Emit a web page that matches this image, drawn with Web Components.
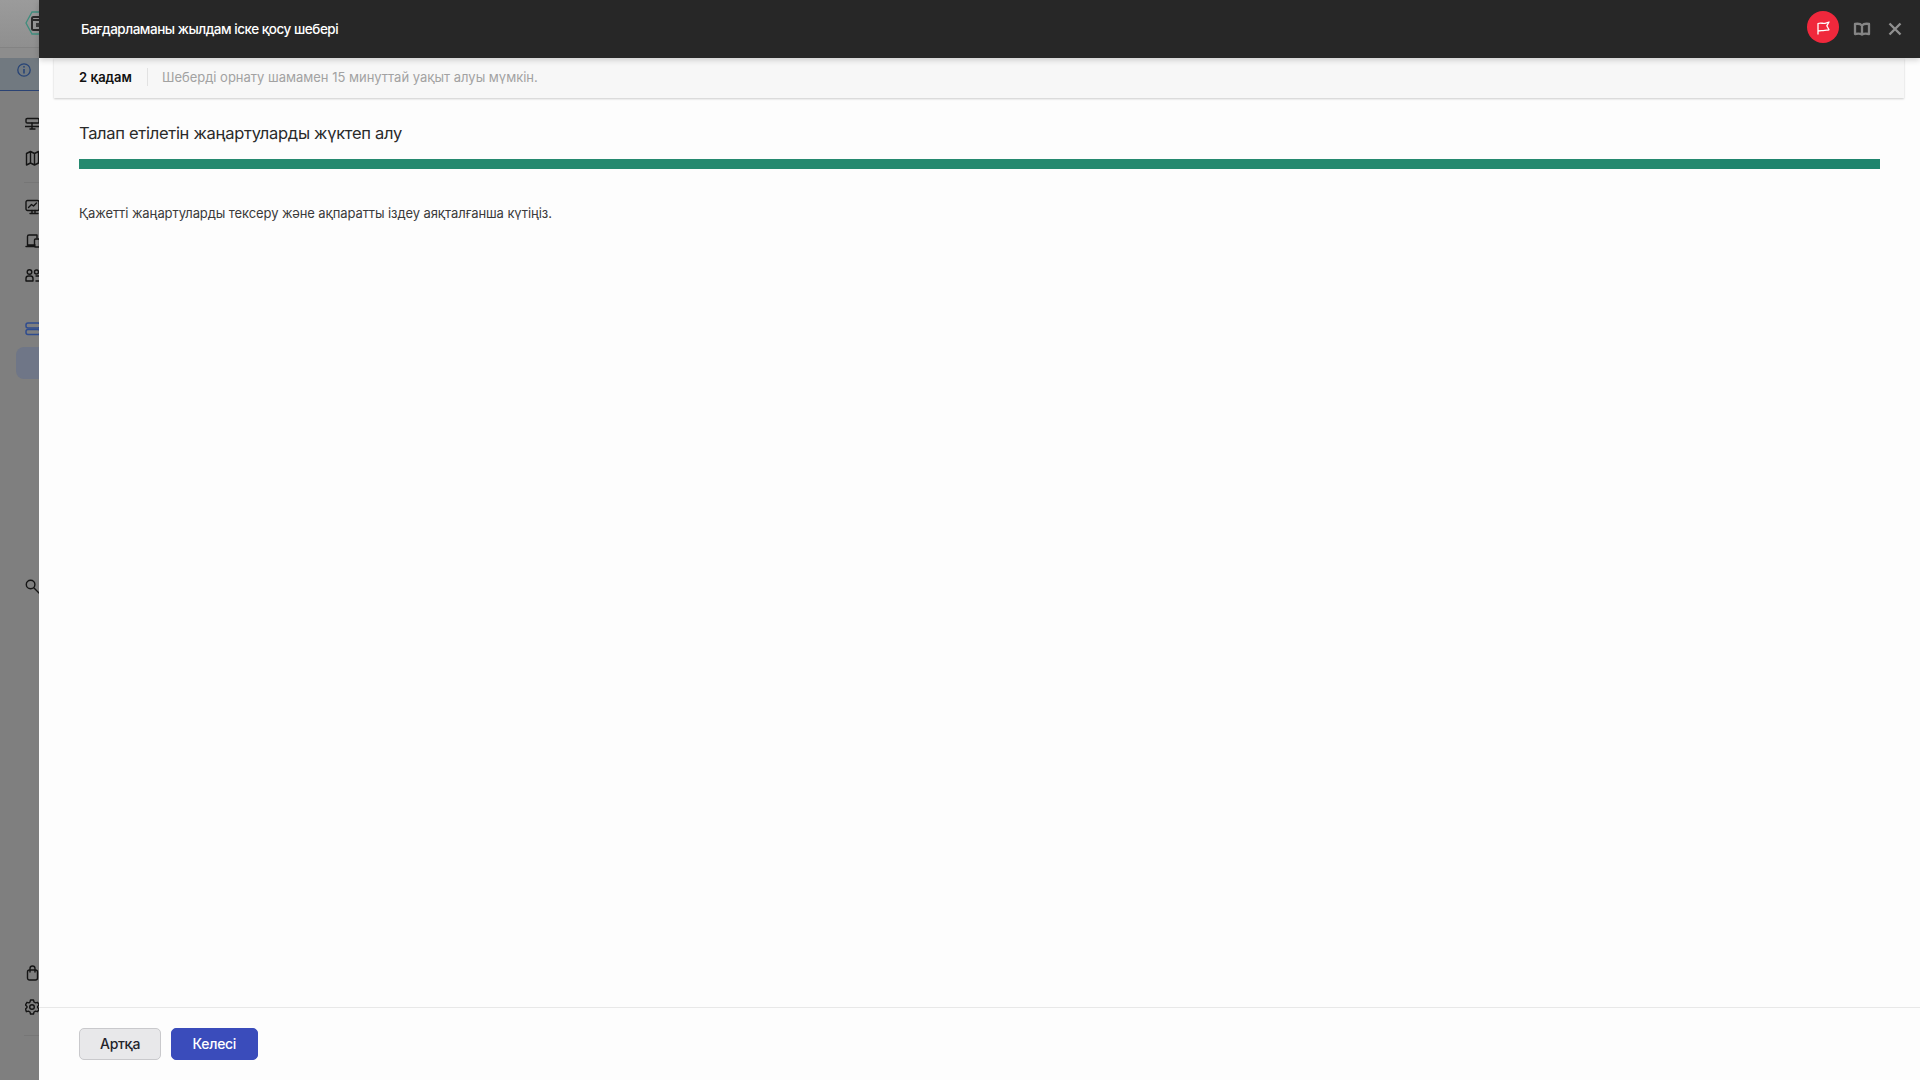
<!DOCTYPE html>
<html lang="kk"><head><meta charset="utf-8"><title>Шебер</title>
<style>
html,body{margin:0;height:100%;overflow:hidden}
body{font-family:Inter,"Noto Sans","Liberation Sans",sans-serif;background:#7f7f7f}
</style></head><body>
<app-shell>
  <side-rail slot="rail"></side-rail>
  <wizard-panel slot="panel" heading="Бағдарламаны жылдам іске қосу шебері">
    <step-bar step="2 қадам">Шеберді орнату шамамен 15 минуттай уақыт алуы мүмкін.</step-bar>
    <wizard-body heading="Талап етілетін жаңартуларды жүктеп алу">Қажетті жаңартуларды тексеру және ақпаратты іздеу аяқталғанша күтіңіз.</wizard-body>
    <wizard-footer slot="footer">
      <ui-button>Артқа</ui-button>
      <ui-button primary>Келесі</ui-button>
    </wizard-footer>
  </wizard-panel>
</app-shell>
<script>
function def(name,html,attrs,fn){
  customElements.define(name,class extends HTMLElement{
    connectedCallback(){
      if(this.shadowRoot)return;
      const r=this.attachShadow({mode:'open'});
      r.innerHTML=html;
      if(fn)fn(this,r);
    }
  });
}
def('app-shell',`<style>:host{display:flex;width:1920px;height:1080px;overflow:hidden}
::slotted([slot=rail]){flex:0 0 39px}::slotted([slot=panel]){flex:1 1 0;min-width:0}</style>
<slot name="rail"></slot><slot name="panel"></slot>`);

const ic=(d,c='#151515')=>`<svg width="20" height="20" viewBox="0 0 20 20" fill="none" stroke="${c}" stroke-width="1.4" stroke-linecap="round" stroke-linejoin="round" style="display:block;flex:none">${d}</svg>`;
const sp=h=>`<div style="height:${h}px;flex:none"></div>`;
def('side-rail',`<style>
:host{display:flex;flex-direction:column;height:1080px;overflow:hidden;background:#7f7f7f;position:relative}
.top{height:47px;flex:none;background:linear-gradient(#9b9b9b,#8f8f8f);padding-left:25px;display:flex;align-items:flex-start;overflow:hidden}
.logo{margin-top:8px;flex:none}
.gap1{height:11px;flex:none;background:#8d8d8d;border-top:1px solid #838383;box-sizing:border-box}
.info{height:33px;flex:none;box-sizing:border-box;background:#717980;border-bottom:1px solid #2b4374;padding:3px 0 0 17px;overflow:hidden}
.row{display:flex;padding-left:25px;overflow:hidden;flex:none;height:20px}
hr{margin:0 0 0 24px;border:0;border-top:1px solid #767676;flex:none}
.sel{margin-left:16px;width:40px;height:32px;border-radius:8px;background:#6f7687;flex:none}
</style>
<div class="top"><svg class="logo" width="40" height="32" viewBox="0 0 40 32" fill="none"><path d="M1 15 7 4h18l6 11-6 11H7z" stroke="#3f8d7d" stroke-width="1.3"/><rect x="7" y="9" width="14" height="13" rx="1.5" stroke="#2a2a2a" stroke-width="2"/><path d="M7 12h14" stroke="#2a2a2a" stroke-width="2"/><path d="M11 15h6v4h-6" fill="#3c3c3c"/></svg></div>
<div class="gap1"></div>
<div class="info"><svg width="20" height="20" viewBox="0 0 20 20" fill="none" stroke="#274476" stroke-width="1.3" style="display:block"><circle cx="7" cy="9" r="6.2"/><path d="M7 8.100V12.500" stroke-width="1.600"/><circle cx="7" cy="5.800" r=".9" fill="#274476" stroke="none"/></svg></div>
${sp(26)}
<div class="row">${ic('<rect x="1" y="1.500" width="13" height="4.500" rx="1.200"/><path d="M7 6v6M0 9.500h14M5 12h5"/>')}</div>
${sp(13)}
<div class="row">${ic('<path d="M1.500 3.500 5.500 1.500 9.500 3.500 13.500 1.500V13L9.500 15 5.500 13 1.500 15zM5.500 1.500V13M9.500 3.500V15"/>')}</div>
${sp(12)}
<hr>
${sp(16)}
<div class="row">${ic('<rect x="1" y="1.500" width="13" height="10" rx="1.500"/><path d="m3.500 8.500 3-3 2 1.500 3-3M5 14.500h8M7 11.500v3M10 11.500v3"/>')}</div>
${sp(14)}
<div class="row">${ic('<path d="M10 12H2.500V3.500a1.500 1.500 0 0 1 1.500-1.500h8V5M1 13.500h9"/><rect x="9.500" y="6" width="5" height="8" rx="1"/>')}</div>
${sp(15)}
<div class="row">${ic('<circle cx="4.500" cy="4" r="2.300"/><circle cx="11.500" cy="4" r="2"/><path d="M1 13V10.500A2.500 2.500 0 0 1 3.500 8h2A2.500 2.500 0 0 1 8 10.500V13zM11 8h2.500A2.500 2.500 0 0 1 16 10.500V13h-5"/>')}</div>
${sp(34)}
<div class="row"><svg width="20" height="20" viewBox="0 0 20 20" fill="none" stroke="#2f4c8f" stroke-width="1.500" style="display:block;flex:none"><rect x="1" y="1" width="14" height="5" rx="2"/><rect x="1" y="7.500" width="14" height="5" rx="2"/></svg></div>
${sp(5)}
<div class="sel"></div>
${sp(200)}
<div class="row">${ic('<circle cx="5.600" cy="5.500" r="4.300"/><path d="m9 9 5 5"/>')}</div>
<div style="flex:1"></div>
<div class="row" style="padding-left:26px">${ic('<rect x="1.500" y="5" width="10" height="10" rx="2"/><path d="M4 7V3.500a2.500 2.500 0 0 1 5 0V7"/>')}</div>
${sp(14)}
<div class="row"><svg width="20" height="20" viewBox="0 0 20 20" fill="none" stroke="#151515" stroke-width="1.400" stroke-linejoin="round" style="display:block;flex:none"><path d="M5.500 1h3l.5 2 1.600.9 2-.6 1.500 2.600-1.500 1.500v1.200l1.500 1.500-1.500 2.600-2-.6-1.600.9-.5 2h-3l-.5-2-1.600-.9-2 .6L.5 10.100 2 8.600V7.400L.5 5.900 2 3.300l2 .6L5 3z"/><circle cx="7" cy="8" r="2.300"/></svg></div>
${sp(16)}
<hr style="margin-bottom:44px">`);

def('wizard-panel',`<style>
:host{display:flex;flex-direction:column;height:1080px;background:#fdfdfd;position:relative}
.head{height:58px;flex:none;box-sizing:border-box;background:#272727;display:flex;align-items:center;padding:0 15px 0 42px;box-shadow:0 2px 6px rgba(0,0,0,.18);position:relative;z-index:2;color:#fff}
h1{margin:0;font:500 13.5px/20px Inter,"Noto Sans",sans-serif;letter-spacing:-.47px;flex:1}
.flag{width:32px;height:32px;border-radius:50%;background:#f0283c;display:flex;align-items:center;justify-content:center;margin:-4px 0 0}
.btn{display:flex;align-items:center;justify-content:center;width:20px;height:20px}
.book{margin:0 13px 0 13px}
.main{flex:1;display:flex;flex-direction:column;min-height:0}
svg{display:block;flex:none}
</style>
<div class="head"><h1 id="h"></h1>
<span class="flag"><svg width="18" height="18" viewBox="0 0 18 18" fill="none" stroke="#fff" stroke-width="1.300" stroke-linejoin="round"><path d="M4 16.500V5.500c3-1.300 5 .5 7-.2l4-1.300-2.200 3.800L15 11.800c-2.500.3-4 1-6.500.8-2-.1-3 0-4.500.4"/></svg></span>
<span class="btn book"><svg width="18" height="18" viewBox="0 0 18 18" fill="none" stroke="#858585" stroke-width="2.300" stroke-linejoin="round"><path d="M9 5.500C7.500 3.800 4.500 3.500 2 4v10c2.500-.5 5.500-.5 7 .5 1.500-1 4.500-1 7-.5V4c-2.500-.5-5.500-.2-7 1.500zV14.500"/></svg></span>
<span class="btn"><svg width="16" height="16" viewBox="0 0 16 16" stroke="#8f8f8f" stroke-width="2.400" fill="none"><path d="m2.500 2.500 11 11M13.500 2.500l-11 11"/></svg></span>
</div>
<div class="main"><slot></slot></div>
<slot name="footer"></slot>`,null,(el,r)=>{r.getElementById('h').textContent=el.getAttribute('heading')});

def('step-bar',`<style>
:host{display:flex;flex:none;height:40px;box-sizing:border-box;margin:0 16px 0 15px;background:#f7f7f7;box-shadow:0 1px 2px rgba(0,0,0,.2);align-items:center;padding:0 0 2px 25px;font-size:13px;position:relative}
b{font-weight:600;color:#111;letter-spacing:0;padding-right:15px;border-right:1px solid #e2e2e2;line-height:18px}
span{color:#a2a2a2;padding-left:14px;letter-spacing:-.01px}
</style><b id="s"></b><span><slot></slot></span>`,null,(el,r)=>{r.getElementById('s').textContent=el.getAttribute('step')});

def('wizard-body',`<style>
:host{display:flex;flex-direction:column;flex:1;padding:24px 40px 0 40px;color:#2b2b2b}
h2{margin:0;font:400 16.5px/22px Inter,"Noto Sans",sans-serif;letter-spacing:-.295px;color:#2a2a2a}
.bar{height:10px;background:linear-gradient(90deg,#25896f 1641px,#1f846d 1641px);margin:15px 0 0}
p{margin:35px 0 0;font-size:13px;line-height:18px;letter-spacing:-.09px;color:#3a3a3a}
</style><h2 id="h"></h2><div class="bar"></div><p><slot></slot></p>`,null,(el,r)=>{r.getElementById('h').textContent=el.getAttribute('heading')});

def('wizard-footer',`<style>
:host{display:flex;flex:none;height:73px;box-sizing:border-box;border-top:1px solid #e8e8e8;padding:20px 40px 0;gap:10px}
</style><slot></slot>`);

def('ui-button',`<style>
:host{display:inline-flex}
button{font:500 14px/20px Inter,"Noto Sans",sans-serif;letter-spacing:-.3px;height:32px;box-sizing:border-box;border-radius:5px;padding:0 20px;border:1px solid #c9c9cc;background:#e8e8ea;color:#24242a}
:host([primary]) button{background:#3a4cbb;border-color:#3a4cbb;color:#fff;padding:0 20.500px}
</style><button><slot></slot></button>`);
</script>
</body></html>
